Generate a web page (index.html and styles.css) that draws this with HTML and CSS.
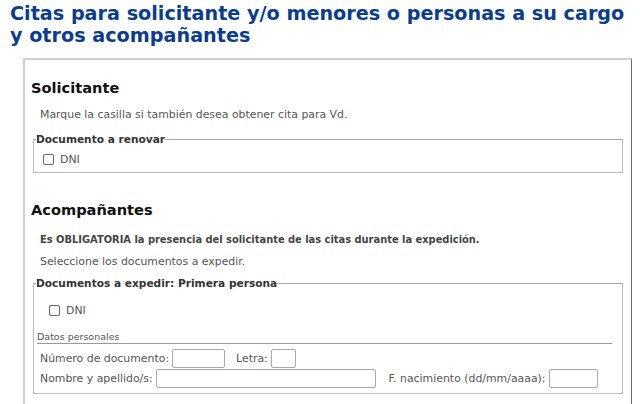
FILE: index.html
```html
<!DOCTYPE html>
<html lang="es">
<head>
<meta charset="utf-8">
<link rel="stylesheet" href="styles.css">
</head>
<body>
<h1 class="title">Citas para solicitante y/o menores o personas a su cargo y otros acompañantes</h1>
<div class="panel">
  <h2 class="section">Solicitante</h2>
  <p class="note">Marque la casilla si también desea obtener cita para Vd.</p>
  <fieldset class="group group-first">
    <legend class="legend">Documento a renovar</legend>
    <label class="check"><span class="box"></span>DNI</label>
  </fieldset>

  <h2 class="section section-second">Acompañantes</h2>
  <p class="note note-bold">Es OBLIGATORIA la presencia del solicitante de las citas durante la expedición.</p>
  <p class="note note-tight">Seleccione los documentos a expedir.</p>
  <fieldset class="group group-second">
    <legend class="legend">Documentos a expedir: Primera persona</legend>
    <label class="check check-indent"><span class="box"></span>DNI</label>
    <div class="subhead">Datos personales</div>
    <div class="row row-first">
      <span class="lbl">Número de documento:</span><span class="input w-num"></span>
      <span class="lbl lbl-gap">Letra:</span><span class="input w-letra"></span>
    </div>
    <div class="row">
      <span class="lbl">Nombre y apellido/s:</span><span class="input w-nombre"></span>
      <span class="lbl lbl-gap2">F. nacimiento (dd/mm/aaaa):</span><span class="input w-fecha"></span>
    </div>
  </fieldset>
</div>
</body>
</html>
```
FILE: styles.css
```css
html, body {
  margin: 0;
  padding: 0;
  background: #fff;
}
body {
  font-family: "DejaVu Sans", Verdana, sans-serif;
  color: #555;
  width: 640px;
  height: 404px;
  overflow: hidden;
}
.title {
  margin: 0;
  padding: 3px 10px 0 10px;
  font-size: 19.2px;
  line-height: 22px;
  font-weight: bold;
  color: #0a3d8f;
}
.panel {
  margin: 11px 8px 0 23px;
  border-top: 2px solid #d0d0d0;
  border-left: 2px solid #d0d0d0;
  border-right: 1px solid #6a6a6a;
  padding: 0 8px 20px 6px;
  height: 400px;
}
.section {
  margin: 19px 0 0 0;
  font-size: 14.6px;
  line-height: 18px;
  font-weight: bold;
  color: #111;
}
.section-second {
  margin-top: 28px;
}
.note {
  margin: 11px 0 0 9px;
  font-size: 10.9px;
  line-height: 13px;
  color: #555;
}
.note-bold {
  font-weight: bold;
  font-size: 9.9px;
  color: #444;
  margin-top: 14px;
}
.note-tight {
  margin-top: 9px;
}
.group {
  margin: 9px 0 0 2px;
  padding: 0 0 5px 9px;
  border: 1px solid #bdbdbd;
  border-top-color: #aaa;
}
.group-first {
  margin-top: 12px;
  height: 38px;
  padding-bottom: 0;
}
.legend {
  padding: 0;
  margin-left: -7px;
  font-size: 10.6px;
  line-height: 13px;
  font-weight: bold;
  color: #333;
}
.check {
  display: flex;
  align-items: center;
  font-size: 10.9px;
  line-height: 13px;
  color: #555;
  margin-top: 7px;
}
.box {
  width: 9px;
  height: 9px;
  border: 1px solid #666;
  border-radius: 2px;
  margin-right: 6px;
  background: #fff;
}
.check-indent {
  margin: 14px 0 0 6px;
}
.subhead {
  margin: 14px 10px 0 -6px;
  font-size: 9.5px;
  line-height: 11px;
  color: #555;
  border-bottom: 1px solid #999;
  padding-bottom: 1px;
}
.row {
  display: flex;
  align-items: center;
  margin-left: -3px;
  font-size: 10.9px;
  line-height: 13px;
  height: 20px;
}
.row-first {
  margin-top: 4px;
}
.lbl {
  color: #555;
  margin-right: 3px;
}
.lbl-gap {
  margin-left: 11px;
}
.lbl-gap2 {
  margin-left: 13px;
}
.input {
  height: 19px;
  border: 1px solid #aaa;
  box-sizing: border-box;
  border-radius: 2px;
  background: #fff;
}
.w-num { width: 53px; }
.w-letra { width: 25px; }
.w-nombre { width: 220px; }
.w-fecha { width: 49px; }
```
